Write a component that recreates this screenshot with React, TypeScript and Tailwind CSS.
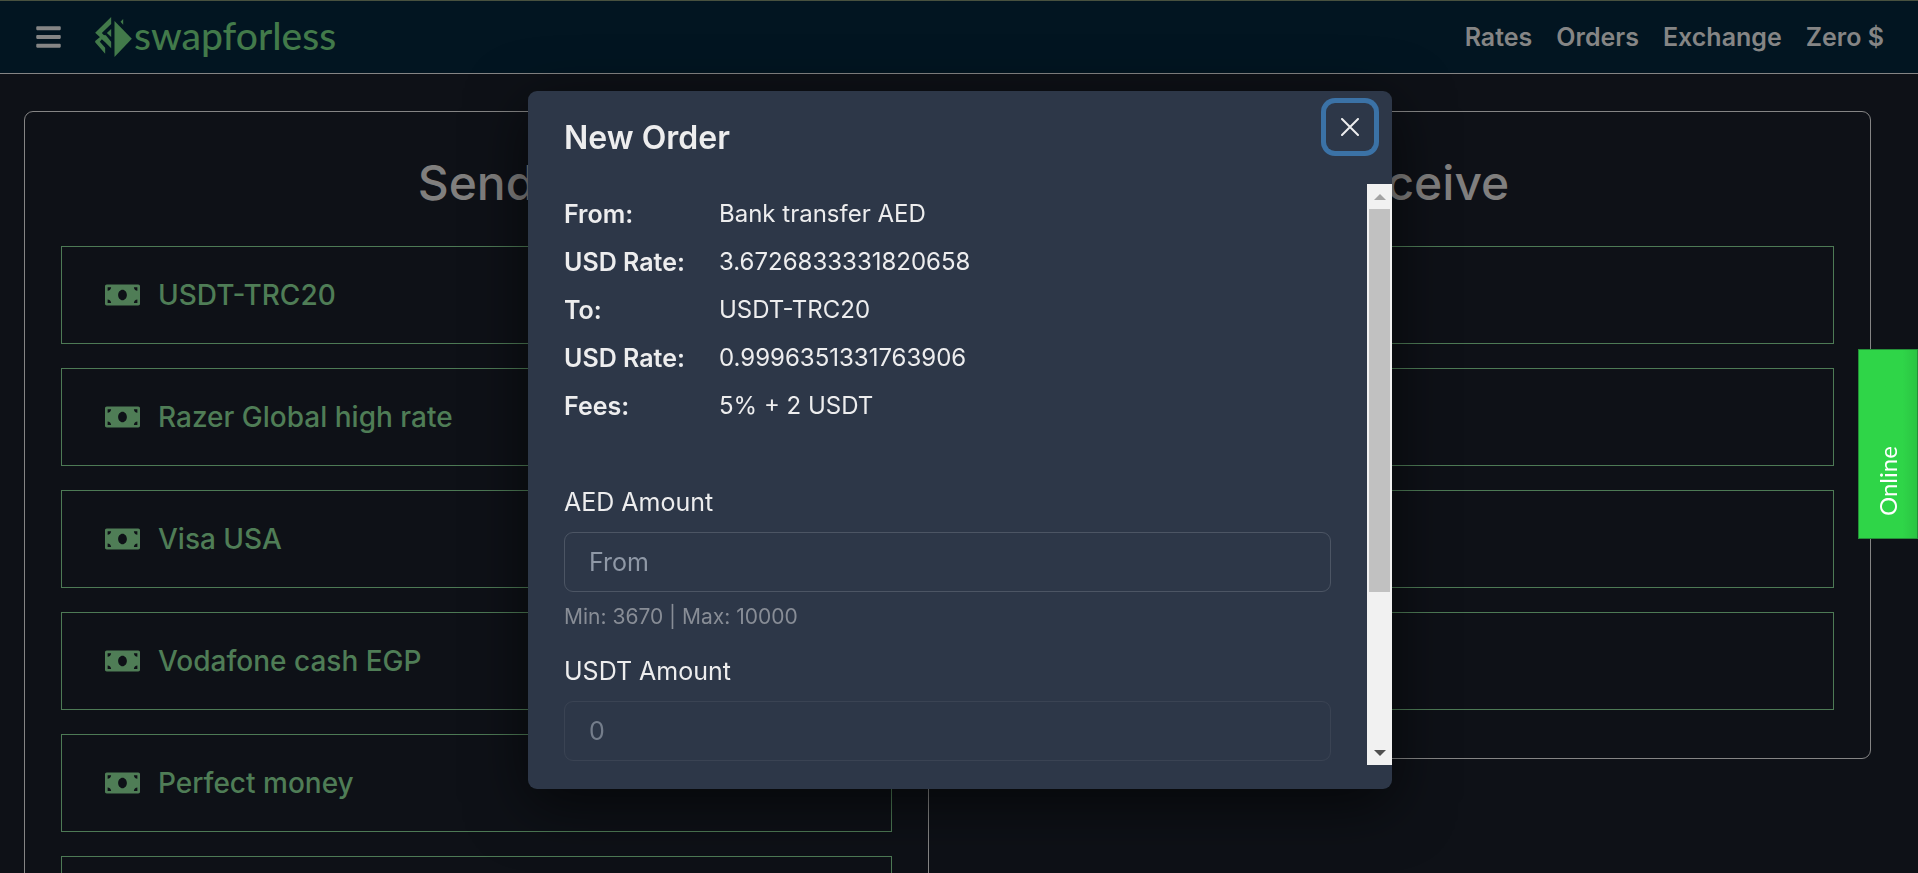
import React from "react";
import { FaBars, FaMoneyBill } from "react-icons/fa";

interface MethodCardProps {
  title: string;
  methods: string[];
}

interface OrderRowProps {
  label: string;
  value: string;
}

const navLinks = ["Rates", "Orders", "Exchange", "Zero $"];

const sendMethods = [
  "USDT-TRC20",
  "Razer Global high rate",
  "Visa USA",
  "Vodafone cash EGP",
  "Perfect money",
  "",
];

const receiveMethods = ["", "", "", ""];

const orderRows: OrderRowProps[] = [
  { label: "From:", value: "Bank transfer AED" },
  { label: "USD Rate:", value: "3.6726833331820658" },
  { label: "To:", value: "USDT-TRC20" },
  { label: "USD Rate:", value: "0.9996351331763906" },
  { label: "Fees:", value: "5% + 2 USDT" },
];

const Logo: React.FC = () => (
  <a href="#" className="flex items-center gap-0.5 text-[#427a4a]">
    <svg viewBox="14 14 110 120" className="h-10 w-[37px]" fill="currentColor" aria-hidden="true">
      <path d="M62 14v21L34 62l8 8-10 8-18-17z" />
      <path d="M49 62l13-12v24z" />
      <path d="M36 68l10 1 16 19v20L44 90l-10-9-6 7 16 18v18L14 90v-4z" />
      <path d="M72 26l52 53-52 55z" />
      <path d="M90 28l8-8v17z" />
    </svg>
    <span className="pb-1 font-[Lato,sans-serif] text-[39px] leading-10 font-medium">swapforless</span>
  </a>
);

const Header: React.FC = () => (
  <header className="flex h-[74px] items-center justify-between border-t border-b border-t-[#48513f] border-b-[#858585] bg-[#021521] pr-[34px] pl-9">
    <div className="flex items-center gap-[34px]">
      <button type="button" aria-label="Menu" className="text-[#858585]">
        <FaBars className="h-7 w-[25px]" />
      </button>
      <Logo />
    </div>
    <nav className="flex gap-6 pt-0.5 text-[25px] font-semibold text-[#858585]">
      {navLinks.map((link) => (
        <a key={link} href="#">
          {link}
        </a>
      ))}
    </nav>
  </header>
);

const MethodCard: React.FC<MethodCardProps> = ({ title, methods }) => (
  <section className="rounded-[9px] border border-[#858585] px-9 pt-9 pb-12">
    <h2 className="mb-7 text-center text-[48px] leading-[70px] font-medium text-[#807f7e]">
      {title}
    </h2>
    <div className="flex flex-col gap-6">
      {methods.map((method, index) => (
        <button
          key={index}
          type="button"
          className="flex h-[98px] items-center gap-[18px] border border-[#4d7a55] px-[43px] text-[28px] font-medium text-[#4f7d56]"
        >
          <FaMoneyBill className="h-7 w-[35px]" />
          {method}
        </button>
      ))}
    </div>
  </section>
);

const OrderRow: React.FC<OrderRowProps> = ({ label, value }) => (
  <div className="flex">
    <dt className="w-[155px] font-semibold">{label}</dt>
    <dd className="text-2xl leading-9">{value}</dd>
  </div>
);

const ScrollBar: React.FC = () => (
  <div className="flex w-[25px] shrink-0 flex-col items-center bg-[#f1f1f1]" aria-hidden="true">
    <div className="flex h-[25px] items-center">
      <div className="border-x-[6px] border-b-[6px] border-x-transparent border-b-[#a3a3a3]" />
    </div>
    <div className="h-[383px] w-[21px] bg-[#c1c1c1]" />
    <div className="mt-auto flex h-[25px] items-center">
      <div className="border-x-[6px] border-t-[6px] border-x-transparent border-t-[#505050]" />
    </div>
  </div>
);

const OrderModal: React.FC = () => (
  <div className="fixed inset-0 flex items-start justify-center pt-[91px] pl-0.5">
    <div
      role="dialog"
      aria-labelledby="order-title"
      className="relative w-full max-w-[864px] rounded-[9px] bg-[#2d3748] pb-6 text-[25px] leading-9 text-[#ededee] shadow-[0_15px_60px_rgba(0,0,0,0.6)]"
    >
      <h1 id="order-title" className="px-9 py-6 text-[32px] leading-[45px] font-semibold">
        New Order
      </h1>
      <button
        type="button"
        aria-label="Close"
        className="absolute top-3 right-[18px] flex size-12 items-center justify-center rounded-[9px] ring-5 ring-[#3b72a6]"
      >
        <svg viewBox="0 0 18 18" className="size-[18px]" stroke="currentColor" strokeWidth="2" strokeLinecap="round">
          <path d="M1 1l16 16M17 1L1 17" />
        </svg>
      </button>

      <div className="flex max-h-[calc(100vh-292px)] overflow-hidden">
        <div className="flex-1 px-9 pt-3">
          <dl className="mb-[60px] flex flex-col gap-3">
            {orderRows.map((row, index) => (
              <OrderRow key={index} label={row.label} value={row.value} />
            ))}
          </dl>

          <label htmlFor="from-amount" className="mb-3 block">
            AED Amount
          </label>
          <input
            id="from-amount"
            placeholder="From"
            className="block h-[60px] w-full rounded-[9px] border border-[#4c5564] px-6 placeholder:text-[#8f98a6]"
          />
          <p className="mt-[7px] mb-[18px] text-[21px] text-[#888d96]">Min: 3670 | Max: 10000</p>

          <label htmlFor="to-amount" className="mb-3 block">
            USDT Amount
          </label>
          <input
            id="to-amount"
            placeholder="0"
            disabled
            className="mb-16 block h-[60px] w-full rounded-[9px] border border-[#3a4353] px-6 placeholder:text-[#747d8b]"
          />
        </div>
        <ScrollBar />
      </div>
    </div>
  </div>
);

const App: React.FC = () => {
  return (
    <div className="h-screen overflow-hidden bg-[#0e1117] font-[Inter,sans-serif]">
      <Header />
      <main className="grid grid-cols-2 items-start gap-[37px] pt-[37px] pr-[47px] pl-6">
        <MethodCard title="Send" methods={sendMethods} />
        <MethodCard title="Receive" methods={receiveMethods} />
      </main>
      <OrderModal />
      <button
        type="button"
        className="fixed top-[349px] right-0 flex h-[190px] w-[60px] rotate-180 items-center justify-start border border-[#248f38] bg-linear-to-l from-[#2fd548] from-75% to-[#2bc443] pt-[22px] font-[Lato,sans-serif] text-2xl text-white [writing-mode:vertical-rl]"
      >
        Online
      </button>
    </div>
  );
};

export default App;
